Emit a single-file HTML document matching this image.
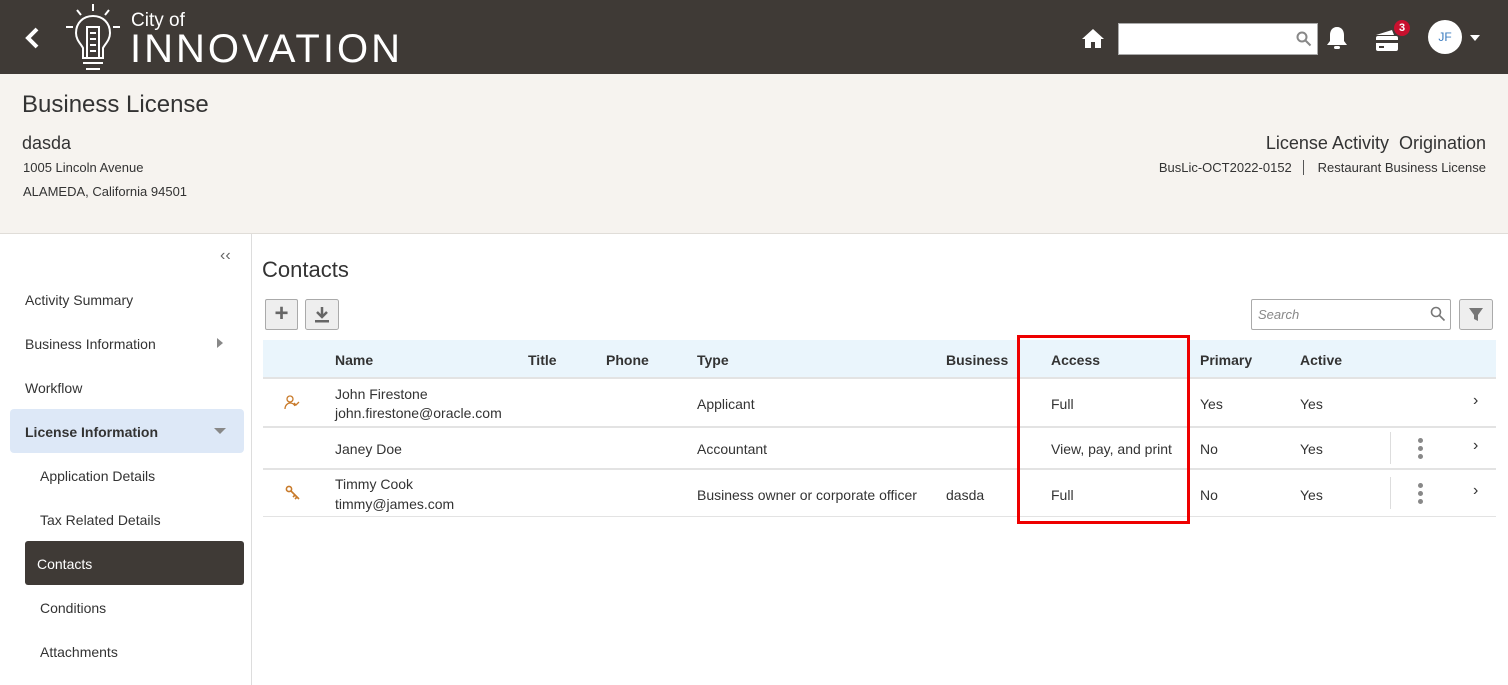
<!DOCTYPE html>
<html><head><meta charset="utf-8"><style>
*{margin:0;padding:0;box-sizing:border-box}
body{width:1508px;height:685px;overflow:hidden;font-family:"Liberation Sans",sans-serif;color:#333;background:#fff;position:relative;font-size:14px}
.a{position:absolute;white-space:nowrap}
#hdr{position:absolute;left:0;top:0;width:1508px;height:74px;background:#3f3a36}
#ban{position:absolute;left:0;top:74px;width:1508px;height:160px;background:#f6f3ef;border-bottom:1px solid #e0ddd8}
#side{position:absolute;left:0;top:234px;width:252px;height:451px;border-right:1px solid #ddd}
.nav{position:absolute;left:25px;font-size:14px;color:#333}
.th{position:absolute;top:352px;font-size:14px;font-weight:bold;color:#333}
.td{position:absolute;font-size:14px;color:#333;white-space:nowrap}
.line{position:absolute;left:263px;width:1233px;height:2px;background:#e3e3e3}
.kb{position:absolute;width:5px;height:5px;border-radius:50%;background:#888}
.chev{position:absolute;left:1473px;font-size:16px;color:#333}
</style></head><body>
<div id="hdr">
<svg class="a" style="left:24px;top:27px" width="16" height="22"><path d="M13 2 L4 11 L13 20" stroke="#fff" stroke-width="4" fill="none"/></svg>
<svg class="a" style="left:62px;top:3px" width="62" height="70" stroke="#fff" stroke-width="2" fill="none">
<path d="M31 1v7M15 7l4 5M47 7l-4 5M4 24h7M51 24h7"/>
<path d="M31 13c-10 0-17 7-17 17 0 7 5 11 7 15v10h20v-10c2-4 7-8 7-15 0-10-7-17-17-17z"/>
<rect x="25" y="24" width="12" height="31"/><path d="M28 30h6M28 36h6M28 42h6M28 48h6M21 60h20M24 66h14"/></svg>
<div class="a" style="left:131px;top:10px;font-size:19px;color:#fff">City of</div>
<div class="a" style="left:130px;top:27px;font-size:40px;color:#fff;letter-spacing:3px">INNOVATION</div>
<svg class="a" style="left:1081px;top:27px" width="24" height="22"><path d="M12 2L1 12h3v9h6v-6h4v6h6v-9h3z" fill="#fff"/></svg>
<div class="a" style="left:1118px;top:23px;width:200px;height:32px;background:#fff;border:1px solid #aaa"></div>
<svg class="a" style="left:1296px;top:31px" width="16" height="16" stroke="#888" stroke-width="2" fill="none"><circle cx="6" cy="6" r="4.5"/><path d="M9.5 9.5l5 5"/></svg>
<svg class="a" style="left:1326px;top:25px" width="22" height="26"><path d="M11 2c-5 0-7 4-7 8v6l-3 4h20l-3-4v-6c0-4-2-8-7-8z" fill="#fff"/><rect x="8" y="21" width="6" height="3" rx="1.5" fill="#fff"/></svg>
<svg class="a" style="left:1373px;top:26px" width="28" height="26"><path d="M3 9l16-5 2 5z" fill="#fff"/><rect x="3" y="10" width="22" height="15" rx="2" fill="#fff"/><rect x="3" y="14" width="22" height="3" fill="#3f3a36"/><rect x="6" y="20" width="5" height="2" fill="#3f3a36"/></svg>
<div class="a" style="left:1394px;top:20px;width:16px;height:16px;border-radius:50%;background:#c8102e;color:#fff;font-size:11px;font-weight:bold;text-align:center;line-height:16px">3</div>
<div class="a" style="left:1428px;top:20px;width:34px;height:34px;border-radius:50%;background:#fff;color:#3a7bbf;font-size:12px;text-align:center;line-height:34px">JF</div>
<div class="a" style="left:1470px;top:35px;width:0;height:0;border-left:5px solid transparent;border-right:5px solid transparent;border-top:6px solid #fff"></div>
</div>
<div id="ban">
<div class="a" style="left:22px;top:17px;font-size:24px;color:#333">Business License</div>
<div class="a" style="left:22px;top:59px;font-size:18px;color:#333">dasda</div>
<div class="a" style="left:23px;top:86px;font-size:13px">1005 Lincoln Avenue</div>
<div class="a" style="left:23px;top:110px;font-size:13px">ALAMEDA, California 94501</div>
<div class="a" style="right:22px;top:59px;font-size:18px;color:#333">License Activity&nbsp; Origination</div>
<div class="a" style="right:22px;top:86px;font-size:13px">BusLic-OCT2022-0152 &nbsp;&nbsp;<span style="border-left:1px solid #555;padding-left:14px">Restaurant Business License</span></div>
</div>
<div id="side">
<div class="a" style="left:220px;top:13px;font-size:16px;color:#666">‹‹</div>
<div class="nav" style="top:58px">Activity Summary</div>
<div class="nav" style="top:102px">Business Information</div>
<div class="a" style="left:217px;top:104px;border-top:5px solid transparent;border-bottom:5px solid transparent;border-left:6px solid #888"></div>
<div class="nav" style="top:146px">Workflow</div>
<div class="a" style="left:10px;top:175px;width:234px;height:44px;background:#dde8f7;border-radius:4px"></div>
<div class="nav" style="top:190px;font-weight:bold">License Information</div>
<div class="a" style="left:214px;top:194px;border-left:6px solid transparent;border-right:6px solid transparent;border-top:6px solid #888"></div>
<div class="nav" style="top:234px;left:40px">Application Details</div>
<div class="nav" style="top:278px;left:40px">Tax Related Details</div>
<div class="a" style="left:25px;top:307px;width:219px;height:44px;background:#3f3a36;border-radius:3px"></div>
<div class="nav" style="top:322px;left:37px;color:#fff">Contacts</div>
<div class="nav" style="top:366px;left:40px">Conditions</div>
<div class="nav" style="top:410px;left:40px">Attachments</div>
</div>
<div class="a" style="left:262px;top:257px;font-size:22px;color:#333">Contacts</div>
<div class="a" style="left:265px;top:299px;width:33px;height:31px;background:#eee;border:1px solid #aaa;border-radius:2px;text-align:center;line-height:28px;font-size:24px;color:#666;font-weight:bold">+</div>
<svg class="a" style="left:305px;top:299px" width="34" height="31"><rect x=".5" y=".5" width="33" height="30" rx="2" fill="#eee" stroke="#aaa"/><path d="M17 8v10M12 13l5 5 5-5" stroke="#666" stroke-width="2.5" fill="none"/><rect x="10" y="21" width="14" height="2.5" fill="#666"/></svg>
<div class="a" style="left:1251px;top:299px;width:200px;height:31px;border:1px solid #aaa;border-radius:2px"></div>
<div class="a" style="left:1258px;top:307px;font-size:13px;font-style:italic;color:#888">Search</div>
<svg class="a" style="left:1430px;top:306px" width="16" height="16" stroke="#777" stroke-width="1.6" fill="none"><circle cx="6" cy="6" r="4.5"/><path d="M9.5 9.5l5 5"/></svg>
<svg class="a" style="left:1459px;top:299px" width="34" height="31"><rect x=".5" y=".5" width="33" height="30" rx="2" fill="#eee" stroke="#aaa"/><path d="M10 9h14l-5 7v6l-4-2v-4z" fill="#777"/></svg>
<div class="a" style="left:263px;top:340px;width:1233px;height:38px;background:#eaf5fc"></div>
<div class="th" style="left:335px">Name</div><div class="th" style="left:528px">Title</div><div class="th" style="left:606px">Phone</div><div class="th" style="left:697px">Type</div><div class="th" style="left:946px">Business</div><div class="th" style="left:1051px">Access</div><div class="th" style="left:1200px">Primary</div><div class="th" style="left:1300px">Active</div>
<div class="line" style="top:377px"></div><div class="line" style="top:426px"></div><div class="line" style="top:468px"></div><div class="line" style="top:516px;height:1px"></div>
<svg class="a" style="left:284px;top:395px" width="16" height="16" stroke="#c87a2a" stroke-width="1.3" fill="none"><circle cx="6" cy="4" r="3"/><path d="M1 14c0-4 3-6 5-6s4 1 5 3M10 8l2 2 3-3"/></svg>
<div class="td" style="left:335px;top:386px">John Firestone</div><div class="td" style="left:335px;top:405px">john.firestone@oracle.com</div>
<div class="td" style="left:697px;top:396px">Applicant</div><div class="td" style="left:1051px;top:396px">Full</div><div class="td" style="left:1200px;top:396px">Yes</div><div class="td" style="left:1300px;top:396px">Yes</div>
<div class="chev" style="top:392px">›</div>
<div class="td" style="left:335px;top:441px">Janey Doe</div><div class="td" style="left:697px;top:441px">Accountant</div><div class="td" style="left:1051px;top:441px">View, pay, and print</div><div class="td" style="left:1200px;top:441px">No</div><div class="td" style="left:1300px;top:441px">Yes</div>
<div class="a" style="left:1390px;top:432px;width:1px;height:32px;background:#ddd"></div>
<div class="kb" style="left:1418px;top:438px"></div><div class="kb" style="left:1418px;top:446px"></div><div class="kb" style="left:1418px;top:454px"></div>
<div class="chev" style="top:437px">›</div>
<svg class="a" style="left:285px;top:485px" width="16" height="16" stroke="#c87a2a" stroke-width="1.6" fill="none"><circle cx="4" cy="4" r="2.6"/><path d="M6 6l8 8M10 10l-2 2M12 12l-2 2"/></svg>
<div class="td" style="left:335px;top:476px">Timmy Cook</div><div class="td" style="left:335px;top:496px">timmy@james.com</div>
<div class="td" style="left:697px;top:487px">Business owner or corporate officer</div><div class="td" style="left:946px;top:487px">dasda</div><div class="td" style="left:1051px;top:487px">Full</div><div class="td" style="left:1200px;top:487px">No</div><div class="td" style="left:1300px;top:487px">Yes</div>
<div class="a" style="left:1390px;top:477px;width:1px;height:32px;background:#ddd"></div>
<div class="kb" style="left:1418px;top:483px"></div><div class="kb" style="left:1418px;top:491px"></div><div class="kb" style="left:1418px;top:499px"></div>
<div class="chev" style="top:482px">›</div>
<div class="a" style="left:1017px;top:335px;width:173px;height:189px;border:3px solid #e00"></div>
</body></html>
